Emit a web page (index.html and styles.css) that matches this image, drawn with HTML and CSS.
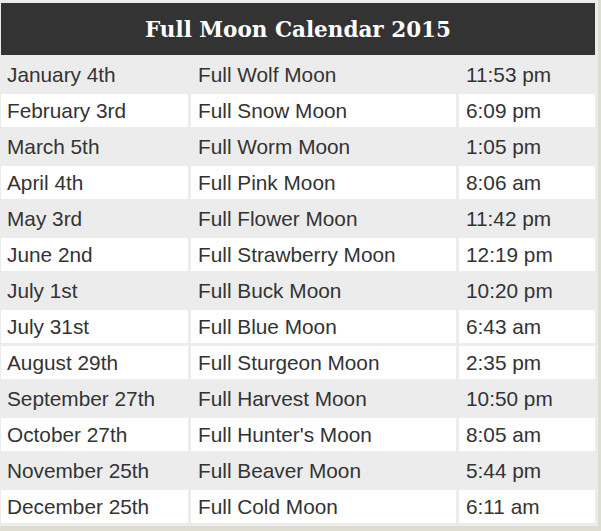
FILE: index.html
```html
<!DOCTYPE html>
<html>
<head>
<meta charset="utf-8">
<link rel="stylesheet" href="styles.css">
</head>
<body>
<table class="moon">
  <thead>
    <tr><th colspan="3" class="title">Full Moon Calendar 2015</th></tr>
  </thead>
  <tbody>
    <tr class="odd"><td>January 4th</td><td>Full Wolf Moon</td><td>11:53 pm</td></tr>
    <tr class="even"><td>February 3rd</td><td>Full Snow Moon</td><td>6:09 pm</td></tr>
    <tr class="odd"><td>March 5th</td><td>Full Worm Moon</td><td>1:05 pm</td></tr>
    <tr class="even"><td>April 4th</td><td>Full Pink Moon</td><td>8:06 am</td></tr>
    <tr class="odd"><td>May 3rd</td><td>Full Flower Moon</td><td>11:42 pm</td></tr>
    <tr class="even"><td>June 2nd</td><td>Full Strawberry Moon</td><td>12:19 pm</td></tr>
    <tr class="odd"><td>July 1st</td><td>Full Buck Moon</td><td>10:20 pm</td></tr>
    <tr class="even"><td>July 31st</td><td>Full Blue Moon</td><td>6:43 am</td></tr>
    <tr class="even"><td>August 29th</td><td>Full Sturgeon Moon</td><td>2:35 pm</td></tr>
    <tr class="odd"><td>September 27th</td><td>Full Harvest Moon</td><td>10:50 pm</td></tr>
    <tr class="even"><td>October 27th</td><td>Full Hunter's Moon</td><td>8:05 am</td></tr>
    <tr class="odd"><td>November 25th</td><td>Full Beaver Moon</td><td>5:44 pm</td></tr>
    <tr class="even"><td>December 25th</td><td>Full Cold Moon</td><td>6:11 am</td></tr>
  </tbody>
</table>
</body>
</html>
```
FILE: styles.css
```css
html, body {
  margin: 0;
  padding: 0;
  background: #dddecf;
}
.moon {
  margin-left: -2px;
  width: 600px;
  background: #ececec;
  border-collapse: separate;
  border-spacing: 3px;
  font-family: "Liberation Sans", Arial, sans-serif;
  font-size: 20.8px;
  color: #333333;
}
.moon .title {
  height: 52px;
  padding: 0;
  background: #333333;
  color: #ffffff;
  font-family: "DejaVu Serif", Georgia, serif;
  font-weight: bold;
  font-size: 21.5px;
  text-align: center;
  vertical-align: middle;
}
.moon td {
  height: 33px;
  padding: 2px 0 0 6px;
  box-sizing: border-box;
  vertical-align: middle;
  white-space: nowrap;
  line-height: 1;
}
.moon td:nth-child(1) { width: 187px; }
.moon td:nth-child(2) { width: 265px; padding-left: 7px; }
.moon td:nth-child(3) { width: 136px; padding-left: 7px; }
.moon .odd td { background: #ececec; }
.moon .even td { background: #ffffff; }
```
